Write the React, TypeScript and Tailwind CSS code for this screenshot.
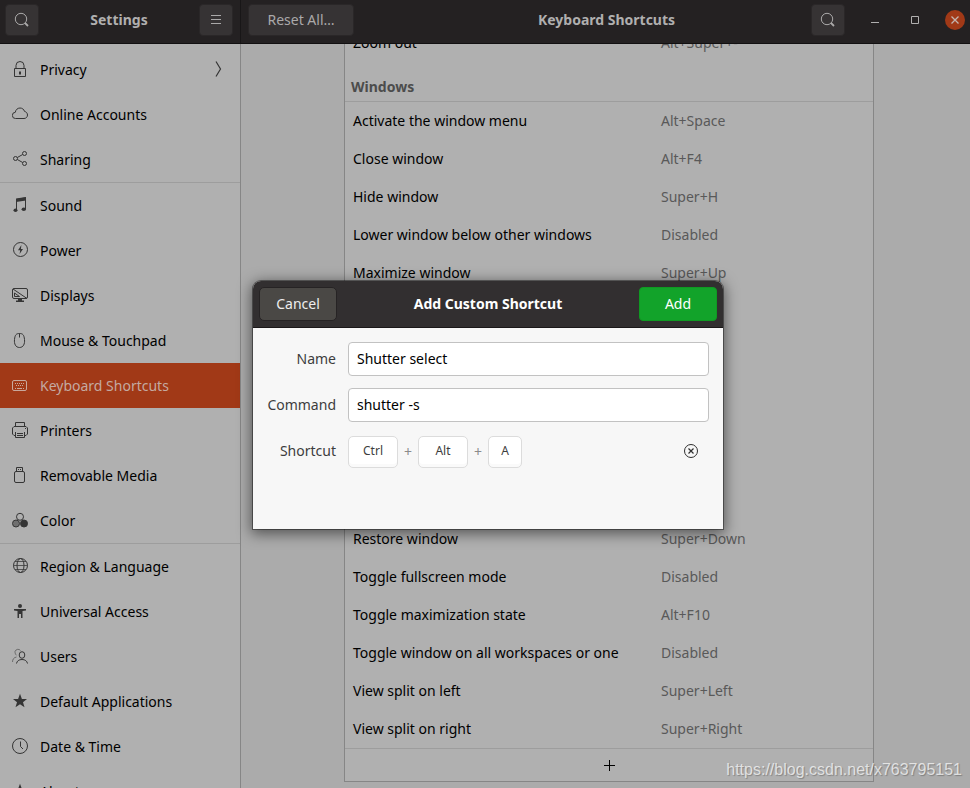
import type { ReactNode } from 'react';

type NavItem = { label: string; icon: ReactNode; active?: boolean; more?: boolean };

function Glyph({ children }: { children: ReactNode }) {
  return (
    <svg
      width="16"
      height="16"
      viewBox="0 0 16 16"
      fill="none"
      stroke="currentColor"
      strokeWidth="1"
      className="shrink-0"
      aria-hidden="true"
    >
      {children}
    </svg>
  );
}

const starPath = 'M8 .8 9.9 5.9 15 6 11 9.2 12.5 14.3 8 11.3 3.5 14.3 5 9.2 1 6 6.1 5.9Z';

const icons = {
  lock: (
    <Glyph>
      <path d="M2.5 7.5h11v8h-11zM4 7.500V4.500a4 4 0 0 1 8 0v3" />
      <path d="M7 10.5h2v3H7z" fill="currentColor" stroke="none" />
    </Glyph>
  ),
  cloud: (
    <Glyph>
      <path d="M3.6 12.5a3.1 3.1 0 0 1-.3-6.2C3.6 3.8 5.6 2 8 2c2.200 0 3.900 1.300 4.500 3.400 1.800.4 3 1.800 3 3.600 0 2-1.500 3.500-3.500 3.500z" />
    </Glyph>
  ),
  share: (
    <Glyph>
      <circle cx="3.500" cy="7.500" r="2" />
      <circle cx="12.500" cy="2.500" r="2" />
      <circle cx="12.500" cy="12.500" r="2" />
      <path d="M5.300 6.500l5.400-3M5.300 8.500l5.400 3" />
    </Glyph>
  ),
  note: (
    <Glyph>
      <path d="M4.500 13V2.500L13.500.8V12" />
      <path d="M4 1.500 14 0v3.500L4 5z" fill="currentColor" stroke="none" />
      <ellipse cx="3.500" cy="13.200" rx="2" ry="1.800" fill="currentColor" stroke="none" />
      <ellipse cx="11.800" cy="12.200" rx="2.200" ry="1.800" fill="currentColor" stroke="none" />
    </Glyph>
  ),
  power: (
    <Glyph>
      <circle cx="8.500" cy="7.500" r="7" />
      <path d="M9.400 3 6 8.300h2.200L7.600 12 11 6.900H8.900z" fill="currentColor" stroke="none" />
    </Glyph>
  ),
  display: (
    <Glyph>
      <rect x=".5" y="1.500" width="15" height="10" rx="1.500" />
      <path d="M1 2l14 9.500M2.500 6v3.500h5z" />
      <path d="M6 12h4v1.500h2V15H4v-1.500h2z" fill="currentColor" stroke="none" />
    </Glyph>
  ),
  mouse: (
    <Glyph>
      <path d="M7.500 1.500c-3.500 0-4.500 1.500-5 6s1.200 8 5 8 5.500-3.500 5-8-1.500-6-5-6zM7.500 1.500v4" />
    </Glyph>
  ),
  keyboard: (
    <Glyph>
      <rect x=".5" y="3.500" width="14" height="10" rx="1.500" />
      <path d="M3 6.500h10M4 8.500h8" strokeDasharray="1 1" />
      <path d="M3 11.500h1M5 11.500h5M11 11.500h1" />
    </Glyph>
  ),
  printer: (
    <Glyph>
      <path d="M3.500 4V.5h9V4M3 13.500H2L.5 12V6L2 4.500h12L15.500 6v6L14 13.500h-1M3.500 10v5.500h9V10M5 11.500h6M5 13.500h6M13 6.500h1" />
    </Glyph>
  ),
  usb: (
    <Glyph>
      <path d="M4.500 4V.5h6V4M6 2.500h1M8 2.500h1" />
      <rect x="2.500" y="4.500" width="10" height="11" rx="1.500" />
    </Glyph>
  ),
  color: (
    <Glyph>
      <circle cx="8" cy="4.800" r="3.500" />
      <circle cx="4" cy="11.500" r="3.500" fill="#6f6f6f" />
      <circle cx="12" cy="11.500" r="3.500" fill="currentColor" />
    </Glyph>
  ),
  globe: (
    <Glyph>
      <circle cx="8.500" cy="7.500" r="7" />
      <ellipse cx="8.500" cy="7.500" rx="3.500" ry="7" />
      <path d="M1.500 7.500h14M3 3.500h11M3 11.500h11" strokeOpacity=".75" />
    </Glyph>
  ),
  access: (
    <Glyph>
      <circle cx="8" cy="3" r="2" fill="currentColor" stroke="none" />
      <path d="M2 6h12v1.500L10.500 8v7H9v-4H7v4H5.500V8L2 7.500z" fill="currentColor" stroke="none" />
    </Glyph>
  ),
  users: (
    <Glyph>
      <path d="M8.500 2.500A3.200 3.200 0 0 0 3 3.500c0 1.700.6 3 1.500 3.800M.5 14c0-2.500 1.200-4.500 4-5" strokeOpacity=".55" />
      <ellipse cx="10" cy="7" rx="2.800" ry="3.300" />
      <path d="M4.500 15.500c.5-2.500 2.400-4 5.500-4s5 1.500 5.500 4" />
    </Glyph>
  ),
  star: (
    <Glyph>
      <path d={starPath} fill="currentColor" stroke="none" />
    </Glyph>
  ),
  clock: (
    <Glyph>
      <circle cx="8" cy="8" r="7.500" />
      <path d="M8.500 3.500v5l2.500 2.500" />
    </Glyph>
  ),
  search: (
    <Glyph>
      <circle cx="7" cy="7" r="5.700" />
      <path d="M11 11l3 3" strokeWidth="1.800" />
    </Glyph>
  ),
};

const groups: NavItem[][] = [
  [
    { label: 'Privacy', icon: icons.lock, more: true },
    { label: 'Online Accounts', icon: icons.cloud },
    { label: 'Sharing', icon: icons.share },
  ],
  [
    { label: 'Sound', icon: icons.note },
    { label: 'Power', icon: icons.power },
    { label: 'Displays', icon: icons.display },
    { label: 'Mouse & Touchpad', icon: icons.mouse },
    { label: 'Keyboard Shortcuts', icon: icons.keyboard, active: true },
    { label: 'Printers', icon: icons.printer },
    { label: 'Removable Media', icon: icons.usb },
    { label: 'Color', icon: icons.color },
  ],
  [
    { label: 'Region & Language', icon: icons.globe },
    { label: 'Universal Access', icon: icons.access },
    { label: 'Users', icon: icons.users },
    { label: 'Default Applications', icon: icons.star },
    { label: 'Date & Time', icon: icons.clock },
    { label: 'About', icon: icons.star },
  ],
];

const upperShortcuts = [
  ['Activate the window menu', 'Alt+Space'],
  ['Close window', 'Alt+F4'],
  ['Hide window', 'Super+H'],
  ['Lower window below other windows', 'Disabled'],
  ['Maximize window', 'Super+Up'],
];

const lowerShortcuts = [
  ['Restore window', 'Super+Down'],
  ['Toggle fullscreen mode', 'Disabled'],
  ['Toggle maximization state', 'Alt+F10'],
  ['Toggle window on all workspaces or one', 'Disabled'],
  ['View split on left', 'Super+Left'],
  ['View split on right', 'Super+Right'],
];

const headerButton =
  'flex h-8 shrink-0 items-center justify-center rounded border border-[#2a2728] bg-[#363334] text-[#aaa9a9]';

function ShortcutRow({ name, keys }: { name: string; keys: string }) {
  return (
    <li className="flex h-[38px] items-center px-2">
      <span className="w-[308px] shrink-0 whitespace-nowrap text-black">{name}</span>
      <span className="text-[#595959]">{keys}</span>
    </li>
  );
}

function KeyCap({ label, wide }: { label: string; wide?: boolean }) {
  return (
    <kbd
      className={`flex h-8 items-center justify-center rounded-[5px] border border-[#dcdcdc] bg-white pb-0.5 font-['Noto_Sans',sans-serif] text-xs text-[#3d3d3d] shadow-[inset_0_-3px_#fafafa] ${
        wide ? 'w-[50px]' : 'w-[34px]'
      }`}
    >
      {label}
    </kbd>
  );
}

function Sidebar() {
  return (
    <nav className="w-[241px] shrink-0 overflow-hidden border-r border-[#868686] bg-[#b0b0b0] pt-[3px]">
      {groups.map((group, index) => (
        <ul key={index} className={index > 0 ? 'border-t border-[#9d9d9d]' : ''}>
          {group.map((item) => (
            <li key={item.label}>
              <a
                href="#"
                className={`flex h-[45px] items-center gap-3 px-3 ${
                  item.active ? 'bg-[#a13917] text-[#c9a89c]' : 'text-[#353535]'
                }`}
              >
                <span className="shrink-0 pb-px">{item.icon}</span>
                <span className={`grow whitespace-nowrap ${item.active ? 'text-[#c4aaa1]' : 'text-black'}`}>
                  {item.label}
                </span>
                {item.more && (
                  <span className="pb-px">
                    <svg width="16" height="16" viewBox="0 0 16 16" fill="none" stroke="currentColor" aria-hidden="true">
                      <path d="M4 .5 8.500 8 4 15.500" strokeWidth="1.200" />
                    </svg>
                  </span>
                )}
              </a>
            </li>
          ))}
        </ul>
      ))}
    </nav>
  );
}

function ShortcutPanel() {
  return (
    <main className="grow overflow-hidden bg-[#ababab] pl-[7px]">
      <section className="mx-auto -mt-5 w-[530px] border border-t-0 border-[#868686] bg-[#b0b0b0]">
        <ul>
          <ShortcutRow name="Zoom out" keys="Alt+Super+-" />
        </ul>
        <h2 className="flex h-10 items-center border-b border-[#9d9d9d] px-1.5 pt-2.5 font-bold text-[#4c4c4c]">
          Windows
        </h2>
        <ul className="mb-[228px]">
          {upperShortcuts.map(([name, keys]) => (
            <ShortcutRow key={name} name={name} keys={keys} />
          ))}
        </ul>
        <ul>
          {lowerShortcuts.map(([name, keys]) => (
            <ShortcutRow key={name} name={name} keys={keys} />
          ))}
        </ul>
        <button
          aria-label="Add shortcut"
          className="flex h-[33px] w-full items-center justify-center border-t border-[#9d9d9d] text-black"
        >
          <svg width="11" height="11" viewBox="0 0 11 11" stroke="currentColor" aria-hidden="true">
            <path d="M5.500 0v11M0 5.500h11" />
          </svg>
        </button>
      </section>
    </main>
  );
}

function ShortcutDialog() {
  const field =
    'h-[34px] w-full rounded border border-[#c2c2c2] bg-white px-2 pb-0.5 text-black outline-none';
  return (
    <form
      role="dialog"
      aria-label="Add Custom Shortcut"
      className="absolute top-[281px] left-[253px] h-[248px] w-[470px] rounded-t-lg bg-[#f7f7f7] shadow-[0_0_0_1px_rgba(0,0,0,0.4),0_3px_14px_2px_rgba(0,0,0,0.5)]"
    >
      <header className="grid h-[47px] grid-cols-[1fr_auto_1fr] items-center rounded-t-lg border-b border-[#1b1819] bg-[#322f30] px-1.5">
        <button
          type="button"
          className="h-[34px] w-[78px] rounded-[5px] border border-[#262324] bg-[#4a4845] text-[#ededed]"
        >
          Cancel
        </button>
        <h1 className="font-bold text-white">Add Custom Shortcut</h1>
        <button
          type="submit"
          className="h-[34px] w-[78px] justify-self-end rounded border border-[#0f9a22] bg-[#12a32a] text-white"
        >
          Add
        </button>
      </header>
      <div className="grid grid-cols-[69px_1fr] items-center gap-3 p-3.5 text-[#3d3d3d]">
        <label htmlFor="name" className="text-right">
          Name
        </label>
        <input id="name" defaultValue="Shutter select" className={field} />
        <label htmlFor="command" className="text-right">
          Command
        </label>
        <input id="command" defaultValue="shutter -s" className={field} />
        <span className="pb-0.5 text-right">Shortcut</span>
        <div className="flex h-9 items-center text-[#8b8b8b]">
          <KeyCap label="Ctrl" wide />
          <span className="w-5 text-center">+</span>
          <KeyCap label="Alt" wide />
          <span className="w-5 text-center">+</span>
          <KeyCap label="A" />
          <button type="button" aria-label="Reset shortcut" className="mr-2.5 ml-auto pb-0.5 text-[#2f2f2f]">
            <svg width="16" height="16" viewBox="0 0 16 16" fill="none" stroke="currentColor" aria-hidden="true">
              <circle cx="8" cy="8" r="6.500" />
              <path d="M5.500 5.500l5 5M10.500 5.500l-5 5" strokeWidth="1.200" />
            </svg>
          </button>
        </div>
      </div>
    </form>
  );
}

export default function App() {
  return (
    <div className="relative flex h-screen flex-col overflow-hidden font-['Noto_Sans',sans-serif] text-sm">
      <header className="flex h-11 shrink-0 border-b border-[#121011] bg-[#242122] text-[#b0afaf]">
        <div className="flex w-[241px] shrink-0 items-center justify-between border-r border-[#181617] pr-[7px] pb-[3px] pl-[5px]">
          <button aria-label="Search settings" className={`${headerButton} w-[34px]`}>
            {icons.search}
          </button>
          <h1 className="font-bold">Settings</h1>
          <button aria-label="Menu" className={`${headerButton} w-[34px]`}>
            <Glyph>
              <path d="M3 3.500h10M3 7.500h10M3 11.500h10" />
            </Glyph>
          </button>
        </div>
        <div className="grid grow grid-cols-[1fr_auto_1fr] items-center pr-[5px] pb-[3px] pl-[7px]">
          <button className={`${headerButton} w-[106px]`}>Reset All…</button>
          <h1 className="font-bold">Keyboard Shortcuts</h1>
          <div className="flex items-center justify-end gap-5">
            <button aria-label="Search shortcuts" className={`${headerButton} w-[34px]`}>
              {icons.search}
            </button>
            <button aria-label="Minimize" className="flex size-5 items-center justify-center">
              <Glyph>
                <path d="M4 10.500h8" />
              </Glyph>
            </button>
            <button aria-label="Maximize" className="flex size-5 items-center justify-center">
              <Glyph>
                <path d="M4.500 4.500h7v7h-7z" />
              </Glyph>
            </button>
            <button
              aria-label="Close"
              className="flex size-5 items-center justify-center rounded-full bg-[#a13917] text-[#c4b5af]"
            >
              <Glyph>
                <path d="M4.500 4.500l7 7M11.500 4.500l-7 7" strokeWidth="1.300" />
              </Glyph>
            </button>
          </div>
        </div>
      </header>
      <div className="flex min-h-0 grow">
        <Sidebar />
        <ShortcutPanel />
      </div>
      <ShortcutDialog />
      <p className="absolute right-2 bottom-1.5 font-['Liberation_Sans',sans-serif] text-base text-white/70 [text-shadow:1px_1px_1px_rgba(0,0,0,0.25)]">
        https://blog.csdn.net/x763795151
      </p>
    </div>
  );
}
